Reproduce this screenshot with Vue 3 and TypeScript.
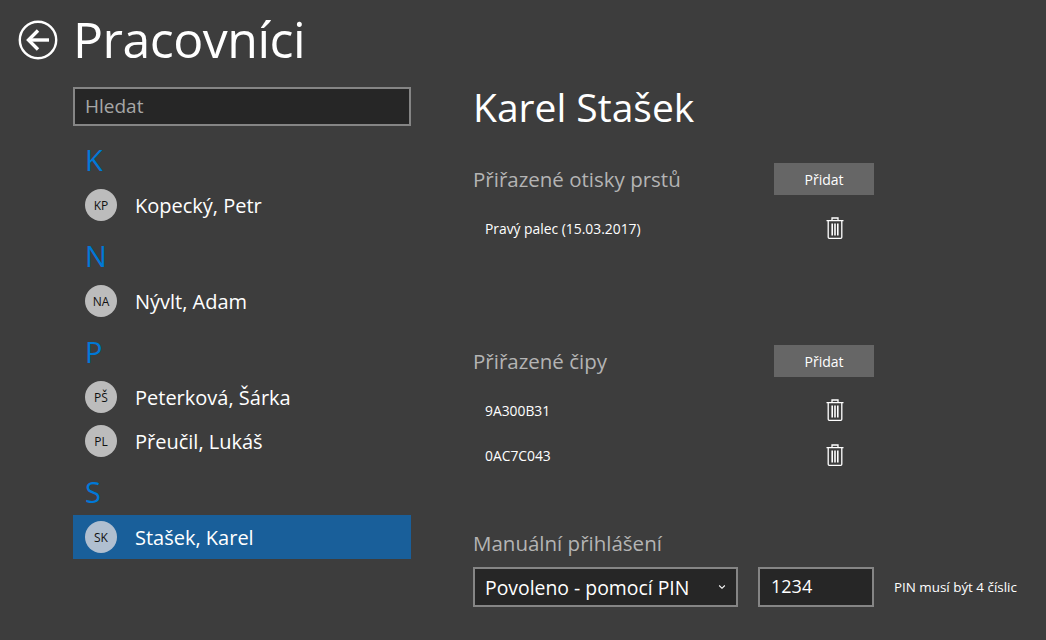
<script setup lang="ts">
interface Person { initials: string; name: string; selected?: boolean }
interface Group { letter: string; people: Person[] }

const groups: Group[] = [
  { letter: 'K', people: [{ initials: 'KP', name: 'Kopecký, Petr' }] },
  { letter: 'N', people: [{ initials: 'NA', name: 'Nývlt, Adam' }] },
  { letter: 'P', people: [{ initials: 'PŠ', name: 'Peterková, Šárka' }, { initials: 'PL', name: 'Přeučil, Lukáš' }] },
  { letter: 'S', people: [{ initials: 'SK', name: 'Stašek, Karel', selected: true }] },
]
const prints = ['Pravý palec (15.03.2017)']
const chips = ['9A300B31', '0AC7C043']
</script>

<template>
  <div class="page">
    <header class="header">
      <svg class="back" width="40" height="40" viewBox="0 0 40 40" fill="none" stroke="#fff">
        <circle cx="20" cy="20" r="18.2" stroke-width="2.4" />
        <path d="M10.5 20H31" stroke-width="3.4" />
        <path d="M20 10.5L10.5 20L20 29.5" stroke-width="3.4" />
      </svg>
      <h1 class="title">Pracovníci</h1>
    </header>
    <main class="body">
      <aside class="left">
        <div class="search">Hledat</div>
        <section v-for="g in groups" :key="g.letter">
          <div class="letter">{{ g.letter }}</div>
          <div v-for="p in g.people" :key="p.name" class="person" :class="{ selected: p.selected }">
            <span class="avatar">{{ p.initials }}</span>
            <span class="name">{{ p.name }}</span>
          </div>
        </section>
      </aside>
      <section class="detail">
        <h2 class="detail-name">Karel Stašek</h2>
        <div class="block block-prints">
          <div class="block-head">
            <span class="block-title">Přiřazené otisky prstů</span>
            <button class="add">Přidat</button>
          </div>
          <div v-for="r in prints" :key="r" class="item">
            <span class="item-text">{{ r }}</span>
            <svg class="trash" width="18" height="22" viewBox="0 0 18 22" fill="none" stroke="#fff" stroke-width="1.3">
              <path d="M0.5 3.6H17.5M2.2 3.6V20.2Q2.2 21.3 3.3 21.3H14.7Q15.8 21.3 15.8 20.2V3.6M6 3.4V1H12V3.4" />
              <path d="M6.2 6.5V18.5M9 6.5V18.5M11.8 6.5V18.5" stroke-width="1.6" />
            </svg>
          </div>
        </div>
        <div class="block block-chips">
          <div class="block-head">
            <span class="block-title">Přiřazené čipy</span>
            <button class="add">Přidat</button>
          </div>
          <div v-for="r in chips" :key="r" class="item">
            <span class="item-text">{{ r }}</span>
            <svg class="trash" width="18" height="22" viewBox="0 0 18 22" fill="none" stroke="#fff" stroke-width="1.3">
              <path d="M0.5 3.6H17.5M2.2 3.6V20.2Q2.2 21.3 3.3 21.3H14.7Q15.8 21.3 15.8 20.2V3.6M6 3.4V1H12V3.4" />
              <path d="M6.2 6.5V18.5M9 6.5V18.5M11.8 6.5V18.5" stroke-width="1.6" />
            </svg>
          </div>
        </div>
        <div class="block-title manual-title">Manuální přihlášení</div>
        <div class="manual">
          <div class="select">
            <span>Povoleno - pomocí PIN</span>
            <svg width="8" height="6" viewBox="0 0 8 6" fill="none" stroke="#fff" stroke-width="1.1"><path d="M1.2 1.5L4 4.3L6.8 1.5" /></svg>
          </div>
          <div class="pin">1234</div>
          <span class="hint">PIN musí být 4 číslic</span>
        </div>
      </section>
    </main>
  </div>
</template>

<style scoped>
.page {
  width: 1046px;
  height: 640px;
  background: #3d3d3d;
  color: #fff;
  font-family: "Open Sans", "Noto Sans", sans-serif;
  overflow: hidden;
}
.header {
  display: flex;
  align-items: center;
  height: 80px;
  padding-left: 18px;
  box-sizing: border-box;
}
.back { flex: none; }
.title {
  margin: -3px 0 0 15px;
  font-size: 50px;
  font-weight: 400;
  letter-spacing: -0.5px;
  line-height: 80px;
}
.body {
  display: flex;
  padding-left: 73px;
}
.left {
  width: 338px;
  flex: none;
  padding-top: 7px;
}
.search {
  box-sizing: border-box;
  height: 39px;
  border: 2px solid #858585;
  background: #262626;
  color: #a6a6a6;
  font-size: 19px;
  line-height: 35px;
  padding-left: 10px;
  margin-bottom: 5px;
}
.letter {
  height: 52px;
  box-sizing: border-box;
  padding: 12px 0 0 12px;
  font-size: 29px;
  line-height: 34px;
  color: #0078d7;
}
.person {
  height: 44px;
  display: flex;
  align-items: center;
  padding-left: 12px;
}
.person.selected { background: #195f9a; }
.avatar {
  width: 32px;
  height: 32px;
  border-radius: 50%;
  background: #bcbcbc;
  color: #111;
  font-size: 12px;
  display: flex;
  align-items: center;
  justify-content: center;
  flex: none;
}
.selected .avatar { background: #b0bfd0; }
.name {
  margin-left: 18px;
  font-size: 20px;
}
.detail {
  margin-left: 62px;
  width: 560px;
}
.detail-name {
  margin: 0;
  font-size: 39px;
  font-weight: 400;
  line-height: 54px;
}
.block-prints { margin-top: 29px; height: 182px; }
.block-chips { height: 171px; }
.block-head {
  width: 401px;
  height: 32px;
  display: flex;
  align-items: center;
  justify-content: space-between;
}
.block-title {
  color: #b4b4b4;
  font-size: 20.5px;
  line-height: 32px;
}
.add {
  width: 100px;
  height: 32px;
  border: 0;
  padding: 0;
  background: #666;
  color: #fff;
  font: inherit;
  font-size: 14px;
}
.item {
  width: 371px;
  height: 45px;
  display: flex;
  align-items: center;
  justify-content: space-between;
  padding-left: 12px;
  box-sizing: border-box;
}
.block-head + .item { margin-top: 11px; }
.item-text { font-size: 13.85px; }
.trash { margin-top: -1px; }
.manual-title { margin-top: 11px; line-height: 32px; }
.manual {
  display: flex;
  align-items: center;
  margin-top: 8px;
}
.select {
  box-sizing: border-box;
  width: 265px;
  height: 40px;
  border: 2px solid #858585;
  background: #262626;
  display: flex;
  align-items: center;
  justify-content: space-between;
  padding: 0 10px 0 10px;
  font-size: 19.4px;
}
.pin {
  box-sizing: border-box;
  width: 116px;
  height: 40px;
  margin-left: 20px;
  border: 2px solid #858585;
  background: #262626;
  padding-left: 11px;
  font-size: 18px;
  line-height: 34px;
}
.hint {
  margin-left: 20px;
  font-size: 13.4px;
}
</style>

<style>
html, body { background: #3d3d3d; }
</style>
